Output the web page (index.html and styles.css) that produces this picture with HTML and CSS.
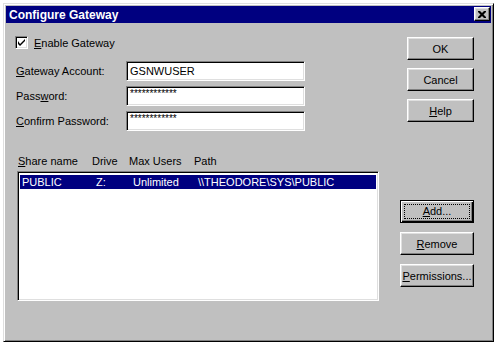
FILE: index.html
```html
<!DOCTYPE html>
<html lang="en">
<head>
<meta charset="UTF-8" />
<title>Configure Gateway</title>
<link rel="stylesheet" href="styles.css">
</head>
<body>
<div class="window">
  <div class="titlebar">
    <span class="title">Configure Gateway</span>
    <button class="close-btn" title="Close">
      <svg width="8" height="7" viewBox="0 0 8 7"><path d="M0 0h2l2 2 2-2h2v1l-2.5 2.5 2.5 2.5v1h-2l-2-2-2 2h-2v-1l2.5-2.5-2.5-2.5z" fill="#000"/></svg>
    </button>
  </div>

  <div class="dialog">
    <div class="top">
      <div class="fields">
        <label class="check-row">
          <span class="checkbox">
            <svg width="7" height="7" viewBox="0 0 7 7"><path d="M0 2v3l2 2 5-5v-2l-5 5z" fill="#000"/></svg>
          </span>
          <span><u>E</u>nable Gateway</span>
        </label>
        <div class="field-row">
          <span class="label"><u>G</u>ateway Account:</span>
          <div class="input">GSNWUSER</div>
        </div>
        <div class="field-row">
          <span class="label">Pass<u>w</u>ord:</span>
          <div class="input secret">************</div>
        </div>
        <div class="field-row">
          <span class="label"><u>C</u>onfirm Password:</span>
          <div class="input secret">************</div>
        </div>
      </div>
      <div class="buttons top-buttons">
        <button class="btn">OK</button>
        <button class="btn">Cancel</button>
        <button class="btn"><u>H</u>elp</button>
      </div>
    </div>

    <div class="bottom">
      <div class="shares">
        <div class="cols header">
          <span><u>S</u>hare name</span>
          <span>Drive</span>
          <span>Max Users</span>
          <span>Path</span>
        </div>
        <div class="listbox">
          <div class="cols row selected">
            <span>PUBLIC</span>
            <span>Z:</span>
            <span>Unlimited</span>
            <span>\\THEODORE\SYS\PUBLIC</span>
          </div>
        </div>
      </div>
      <div class="buttons side-buttons">
        <button class="btn default"><span class="focus"><u>A</u>dd...</span></button>
        <button class="btn"><u>R</u>emove</button>
        <button class="btn"><u>P</u>ermissions...</button>
      </div>
    </div>
  </div>
</div>
</body>
</html>
```

FILE: styles.css
```css
body {
  margin: 0;
  background: #fff;
  font-family: "Liberation Sans", Arial, sans-serif;
  font-size: 11px;
  color: #000;
}
u {
  text-decoration: underline;
  text-underline-offset: 1px;
}

/* window frame */
.window {
  box-sizing: border-box;
  width: 491px;
  height: 339px;
  margin: 3px 0 0 3px;
  padding: 2px;
  background: #c0c0c0;
  border: 1px solid;
  border-color: #dfdfdf #000 #000 #dfdfdf;
  box-shadow: inset 1px 1px #fff, inset -1px -1px #808080;
}
.titlebar {
  height: 17px;
  background: #000080;
  color: #fff;
  display: flex;
  justify-content: space-between;
  align-items: center;
  padding: 0 1px 0 3px;
}
.title {
  font-weight: bold;
  font-size: 12px;
}
.close-btn {
  box-sizing: border-box;
  width: 16px;
  height: 14px;
  padding: 0;
  margin-top: -1px;
  background: #c0c0c0;
  border: 1px solid;
  border-color: #fff #000 #000 #fff;
  box-shadow: inset -1px -1px #808080, inset 1px 1px #dfdfdf;
  display: flex;
  align-items: center;
  justify-content: center;
}

.dialog {
  padding: 13px 17px 0 9px;
}

/* upper part */
.top {
  display: flex;
  justify-content: space-between;
  height: 95px;
}
.fields {
  display: flex;
  flex-direction: column;
}
.check-row {
  display: flex;
  align-items: center;
  gap: 6px;
  height: 13px;
  margin-bottom: 12px;
}
.checkbox {
  box-sizing: border-box;
  width: 13px;
  height: 13px;
  background: #fff;
  border: 1px solid;
  border-color: #808080 #fff #fff #808080;
  box-shadow: inset 1px 1px #000, inset -1px -1px #dfdfdf;
  display: flex;
  align-items: center;
  justify-content: center;
}
.field-row {
  display: flex;
  align-items: center;
  margin-bottom: 5px;
}
.label {
  width: 110px;
  padding-left: 1px;
}
.input {
  box-sizing: border-box;
  width: 179px;
  height: 20px;
  background: #fff;
  border: 1px solid;
  border-color: #808080 #fff #fff #808080;
  box-shadow: inset 1px 1px #000, inset -1px -1px #dfdfdf;
  padding: 0 3px;
  line-height: 18px;
  font-size: 11px;
}
.input.secret {
  font-size: 10px;
  line-height: 14px;
  color: #000;
}

.buttons {
  display: flex;
  flex-direction: column;
}
.top-buttons {
  margin-top: 1px;
  gap: 8px;
}
.btn {
  box-sizing: border-box;
  width: 67px;
  height: 23px;
  padding: 0;
  font-family: inherit;
  font-size: 11px;
  color: #000;
  background: #c0c0c0;
  border: 1px solid;
  border-color: #fff #000 #000 #fff;
  box-shadow: inset -1px -1px #808080, inset 1px 1px #dfdfdf;
}

/* lower part */
.bottom {
  display: flex;
  justify-content: space-between;
  margin-top: 24px;
}
.shares {
  margin-left: 2px;
  width: 362px;
}
.cols {
  display: grid;
  grid-template-columns: 74px 37px 65px 1fr;
  white-space: nowrap;
}
.header {
  padding-left: 1px;
  height: 13px;
  line-height: 13px;
  margin-bottom: 3px;
}
.listbox {
  box-sizing: border-box;
  height: 130px;
  background: #fff;
  border: 1px solid;
  border-color: #808080 #fff #fff #808080;
  box-shadow: inset 1px 1px #000, inset -1px -1px #dfdfdf;
  padding: 3px 2px 2px;
}
.row {
  height: 14px;
  line-height: 14px;
  padding-left: 2px;
}
.row.selected {
  background: #000080;
  color: #fff;
}
.side-buttons {
  margin-top: 45px;
  gap: 9px;
}
.side-buttons .btn {
  width: 74px;
}
.btn.default {
  border: 1px solid #000;
  box-shadow: inset 1px 1px #fff, inset -1px -1px #000, inset -2px -2px #808080;
  padding: 3px;
}
.focus {
  display: block;
  height: 100%;
  box-sizing: border-box;
  border: 1px dotted #000;
  line-height: 13px;
}
```
